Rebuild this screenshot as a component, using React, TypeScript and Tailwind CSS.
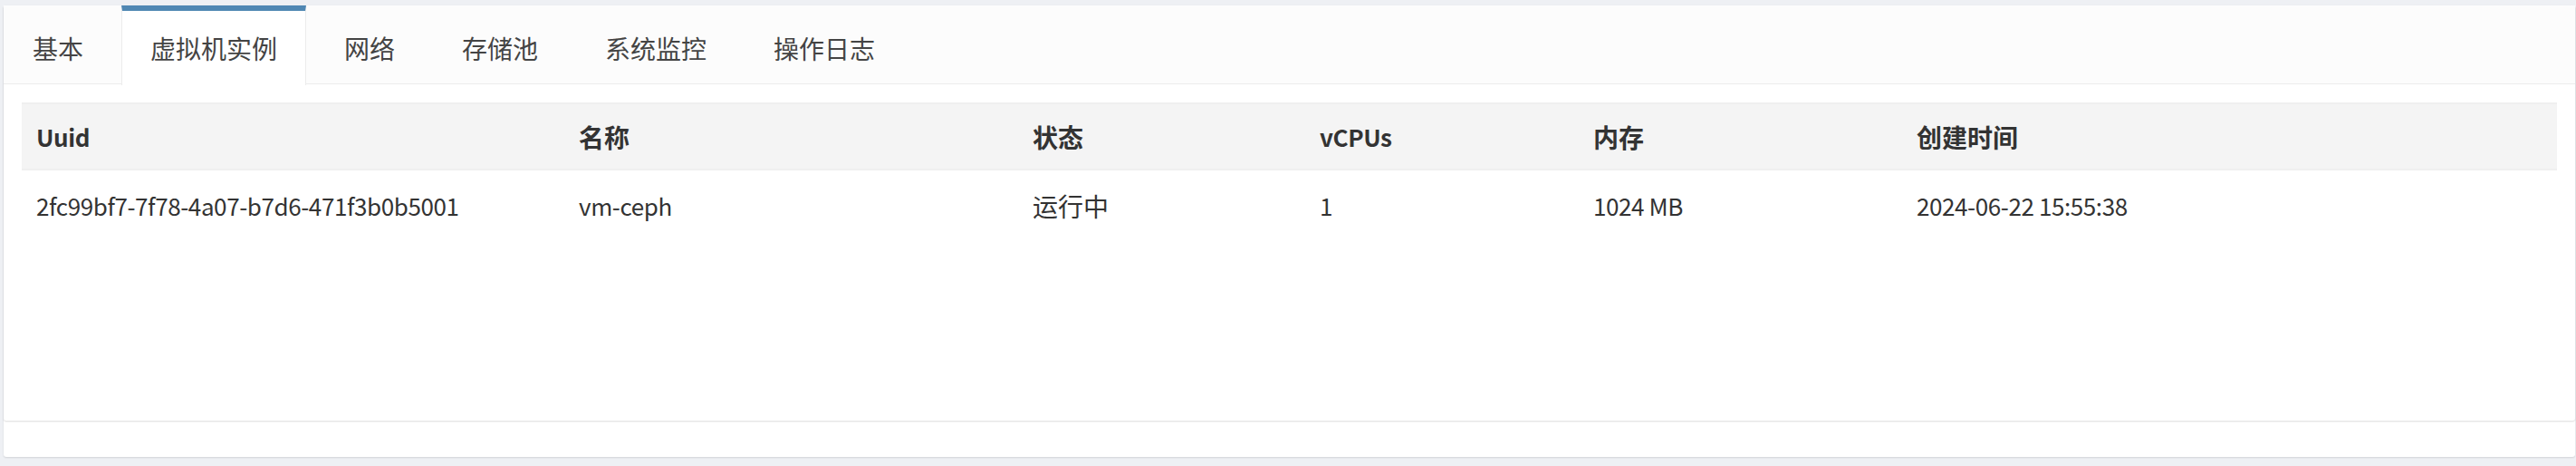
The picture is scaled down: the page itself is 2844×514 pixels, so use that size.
const tabs = ["基本", "虚拟机实例", "网络", "存储池", "系统监控", "操作日志"];

const columns = ["Uuid", "名称", "状态", "vCPUs", "内存", "创建时间"];

const rows = [
  ["2fc99bf7-7f78-4a07-b7d6-471f3b0b5001", "vm-ceph", "运行中", "1", "1024 MB", "2024-06-22 15:55:38"],
];

const gridCols = "grid grid-cols-[599px_501px_317px_302px_357px_1fr]";

// latin text in the reference runs narrower than the CJK face's own latin glyphs
const isLatin = (s: string) => /^[\x00-\x7f]+$/.test(s);

export default function App() {
  const active = 1;

  return (
    <div
      className="w-full h-[514px] bg-[#eef0f4] pt-[6px] pl-[4px] pr-[1px] text-[#333]"
      style={{ fontFamily: '"Noto Sans CJK SC", "Noto Sans", sans-serif' }}
    >
      <div className="h-[498px] bg-white rounded-[3px] shadow-[0_1px_2px_rgba(0,0,0,0.12)] flex flex-col">
        {/* Tab card */}
        <div className="h-[458px] bg-white rounded-[3px] shadow-[0_1px_2px_rgba(0,0,0,0.14)] flex flex-col">
          <div className="flex bg-[#fcfcfc] border-b border-[#ececec] h-[87px]">
            {tabs.map((t, i) => (
              <div
                key={t}
                className={`px-[31px] pt-[20px] pb-[18px] text-[28px] leading-[42px] border-t-[6px] border-x mr-[10px] text-[#444] ${
                  i === active
                    ? "bg-white border-t-[#4f87b3] border-x-[#ececec] -mb-px h-[88px]"
                    : "border-t-transparent border-x-transparent"
                }`}
              >
                {t}
              </div>
            ))}
          </div>

          {/* Table */}
          <div className="mx-[20px] mt-[20px] text-[28px] leading-[42px]">
            <div className={`${gridCols} bg-[#f4f4f4] border-y-2 border-[#efefef] font-bold h-[75px] items-center`}>
              {columns.map((c) => (
                <div key={c} className={`pl-[16px] ${isLatin(c) ? "text-[26px] tracking-[-0.4px]" : ""}`}>
                  {c}
                </div>
              ))}
            </div>
            {rows.map((r, ri) => (
              <div key={ri} className={`${gridCols} h-[78px] items-center`}>
                {r.map((v, ci) => (
                  <div key={ci} className={`pl-[16px] ${isLatin(v) ? "text-[26px] tracking-[-0.4px]" : ""}`}>
                    {v}
                  </div>
                ))}
              </div>
            ))}
          </div>
        </div>
      </div>
    </div>
  );
}
